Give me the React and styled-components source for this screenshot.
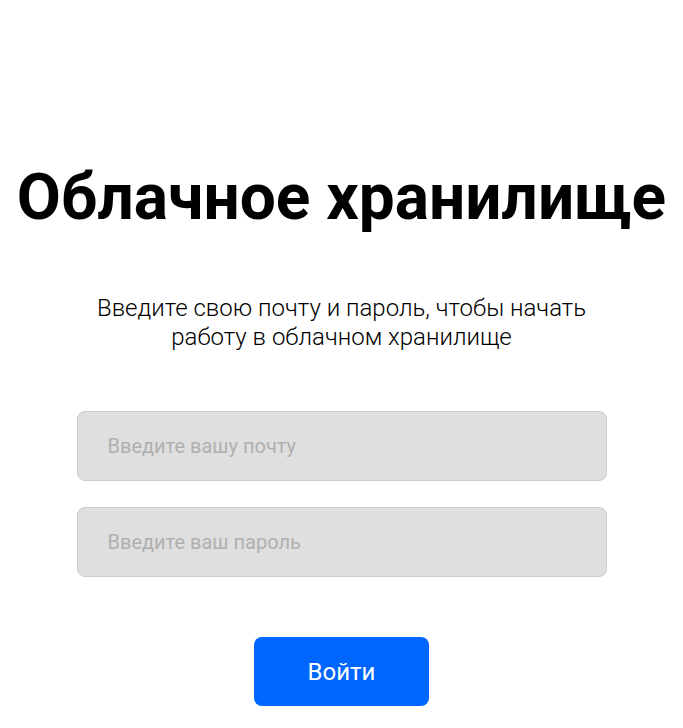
import React from "react";
import styled, { createGlobalStyle } from "styled-components";

const GlobalStyle = createGlobalStyle`
  *, *::before, *::after { box-sizing: border-box; }
  body { margin: 0; background: #ffffff; color: #000000; font-family: Roboto, sans-serif; }
`;

const Page = styled.main`
  display: flex;
  flex-direction: column;
  align-items: center;
  padding: 160px 16px 22px;
`;

const Title = styled.h1`
  margin: 0;
  font-size: 64px;
  line-height: 75px;
  font-weight: 700;
  text-align: center;
`;

const Lead = styled.p`
  margin: 59px 0 0;
  max-width: 530px;
  font-size: 24px;
  line-height: 29px;
  font-weight: 300;
  text-align: center;
`;

const Form = styled.form`
  display: flex;
  flex-direction: column;
  align-items: center;
  gap: 26px;
  width: 100%;
  max-width: 530px;
  margin-top: 59px;
`;

const Field = styled.input`
  width: 100%;
  height: 70px;
  padding: 0 30px;
  border: 1px solid #cccccc;
  border-radius: 8px;
  background: #dfdfdf;
  color: #000000;
  font: 400 20px Roboto, sans-serif;

  &::placeholder { color: #b0b0b0; opacity: 1; }
`;

const SubmitButton = styled.button`
  margin-top: 34px;
  width: 175px;
  height: 69px;
  border: 0;
  border-radius: 8px;
  background: #0066ff;
  color: #ffffff;
  font: 400 24px Roboto, sans-serif;
  cursor: pointer;
`;

export default function App() {
  return (
    <>
      <GlobalStyle />
      <Page>
        <Title>Облачное хранилище</Title>
        <Lead>Введите свою почту и пароль, чтобы начать работу в облачном хранилище</Lead>
        <Form onSubmit={(event) => event.preventDefault()}>
          <Field type="email" name="email" aria-label="Введите вашу почту" placeholder="Введите вашу почту" />
          <Field type="password" name="password" aria-label="Введите ваш пароль" placeholder="Введите ваш пароль" />
          <SubmitButton type="submit">Войти</SubmitButton>
        </Form>
      </Page>
    </>
  );
}
